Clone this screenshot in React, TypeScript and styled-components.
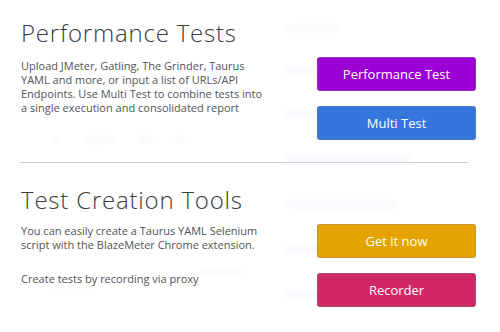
import React from 'react';
import styled, { createGlobalStyle } from 'styled-components';

const Global = createGlobalStyle`
  html, body { margin: 0; padding: 0; background: #fff; }
  body { width: 500px; height: 332px; overflow: hidden; font-family: "Open Sans", "Liberation Sans", sans-serif; }
`;

const Stage = styled.div`
  position: relative;
  width: 500px;
  height: 332px;
  overflow: hidden;
  background: #fff;
`;

/* ---------- blurred application behind the dialog ---------- */
const Backdrop = styled.div`
  display: flex;
  width: 100%;
  height: 100%;
  filter: blur(2px);
`;

const BackLeft = styled.div`
  width: 203px;
  border-right: 1px solid #e8eaf0;
  display: flex;
  flex-direction: column;
  padding: 136px 0 0 52px;
  box-sizing: border-box;
  gap: 140px;
`;

const BackMid = styled.div`
  width: 65px;
  display: flex;
  flex-direction: column;
  padding-top: 201px;
  gap: 60px;
`;

const FilterRow = styled.div`
  display: flex;
  align-items: center;
  gap: 24px;
`;

const Blob = styled.div<{ w: number; tone?: string }>`
  width: ${(p) => p.w}px;
  height: 7px;
  border-radius: 3px;
  background: ${(p) => p.tone || '#c9ccd3'};
`;

const BackRight = styled.div`
  flex: 1;
  display: flex;
  flex-direction: column;
  padding-top: 12px;
`;

const FakeInput = styled.div`
  height: 30px;
  border: 1px solid #e6e8ee;
  border-right: none;
  border-radius: 4px 0 0 4px;
  display: flex;
  align-items: center;
  padding-left: 17px;
  margin-bottom: 3px;
`;

const BackRow = styled.div`
  height: 44px;
  border-bottom: 1px solid #eef0f4;
  display: flex;
  align-items: center;
  padding-left: 17px;
`;

const Overlay = styled.div`
  position: absolute;
  inset: 0;
  background: rgba(255, 255, 255, 0.87);
`;

/* ---------- dialog ---------- */
const Dialog = styled.div`
  position: absolute;
  inset: 0;
  padding: 17px 24px 0 21px;
  display: flex;
  flex-direction: column;
`;

const Section = styled.section<{ top?: number; bottom?: number }>`
  display: flex;
  flex-direction: column;
  padding-top: ${(p) => p.top ?? 0}px;
  padding-bottom: ${(p) => p.bottom ?? 0}px;
`;

const Title = styled.h2`
  margin: 0 0 8px;
  font-family: "Open Sans", "Liberation Sans", sans-serif;
  font-size: 24px;
  line-height: 32px;
  font-weight: 300;
  color: #383c41;
  letter-spacing: 0.8px;
`;

const Body = styled.div`
  display: flex;
  justify-content: space-between;
  align-items: flex-start;
`;

const TextCol = styled.div<{ top: number }>`
  width: 250px;
  padding-top: ${(p) => p.top}px;
`;

const Para = styled.p<{ gap?: number }>`
  margin: ${(p) => p.gap ?? 0}px 0 0;
  font-size: 11px;
  line-height: 14px;
  color: #505458;
`;

const ButtonCol = styled.div`
  width: 159px;
  display: flex;
  flex-direction: column;
  gap: 15px;
`;

const ActionButton = styled.button<{ bg: string }>`
  height: 34px;
  width: 100%;
  border: 1px solid rgba(120, 130, 150, 0.35);
  border-radius: 3px;
  background: ${(p) => p.bg};
  color: #fff;
  font-family: "Open Sans", "Liberation Sans", sans-serif;
  font-size: 13px;
  line-height: 18px;
  padding: 0;
  cursor: pointer;
`;

const Divider = styled.hr`
  margin: 0 8px 0 -1px;
  border: none;
  border-top: 1px solid #c6cad1;
  height: 0;
`;

export default function App() {
  return (
    <Stage>
      <Global />
      <Backdrop>
        <BackLeft>
          <FilterRow>
            <Blob w={8} />
            <Blob w={30} />
            <Blob w={14} />
            <Blob w={8} />
          </FilterRow>
          <Blob w={40} tone="#dfe3ee" />
        </BackLeft>
        <BackMid>
          <Blob w={40} tone="#c4d0f0" />
          <Blob w={40} tone="#c4d0f0" />
        </BackMid>
        <BackRight>
          <FakeInput>
            <Blob w={54} />
          </FakeInput>
          <BackRow><Blob w={100} tone="#b7c6f0" /></BackRow>
          <BackRow><Blob w={80} tone="#b7c6f0" /></BackRow>
          <BackRow><Blob w={126} tone="#b7c6f0" /></BackRow>
          <BackRow><Blob w={112} tone="#b7c6f0" /></BackRow>
          <BackRow><Blob w={90} tone="#b7c6f0" /></BackRow>
          <BackRow><Blob w={104} tone="#b7c6f0" /></BackRow>
        </BackRight>
      </Backdrop>
      <Overlay />
      <Dialog>
        <Section bottom={22}>
          <Title>Performance Tests</Title>
          <Body>
            <TextCol top={2}>
              <Para>
                Upload JMeter, Gatling, The Grinder, Taurus YAML and more, or input a list of
                URLs/API Endpoints. Use Multi Test to combine tests into a single execution and
                consolidated report
              </Para>
            </TextCol>
            <ButtonCol>
              <ActionButton bg="#9b00d4">Performance Test</ActionButton>
              <ActionButton bg="#3576dc">Multi Test</ActionButton>
            </ButtonCol>
          </Body>
        </Section>
        <Divider />
        <Section top={21}>
          <Title>Test Creation Tools</Title>
          <Body>
            <TextCol top={0}>
              <Para>
                You can easily create a Taurus YAML Selenium script with the BlazeMeter Chrome
                extension.
              </Para>
              <Para gap={20}>Create tests by recording via proxy</Para>
            </TextCol>
            <ButtonCol>
              <ActionButton bg="#e5a300">Get it now</ActionButton>
              <ActionButton bg="#cf2864">Recorder</ActionButton>
            </ButtonCol>
          </Body>
        </Section>
      </Dialog>
    </Stage>
  );
}
